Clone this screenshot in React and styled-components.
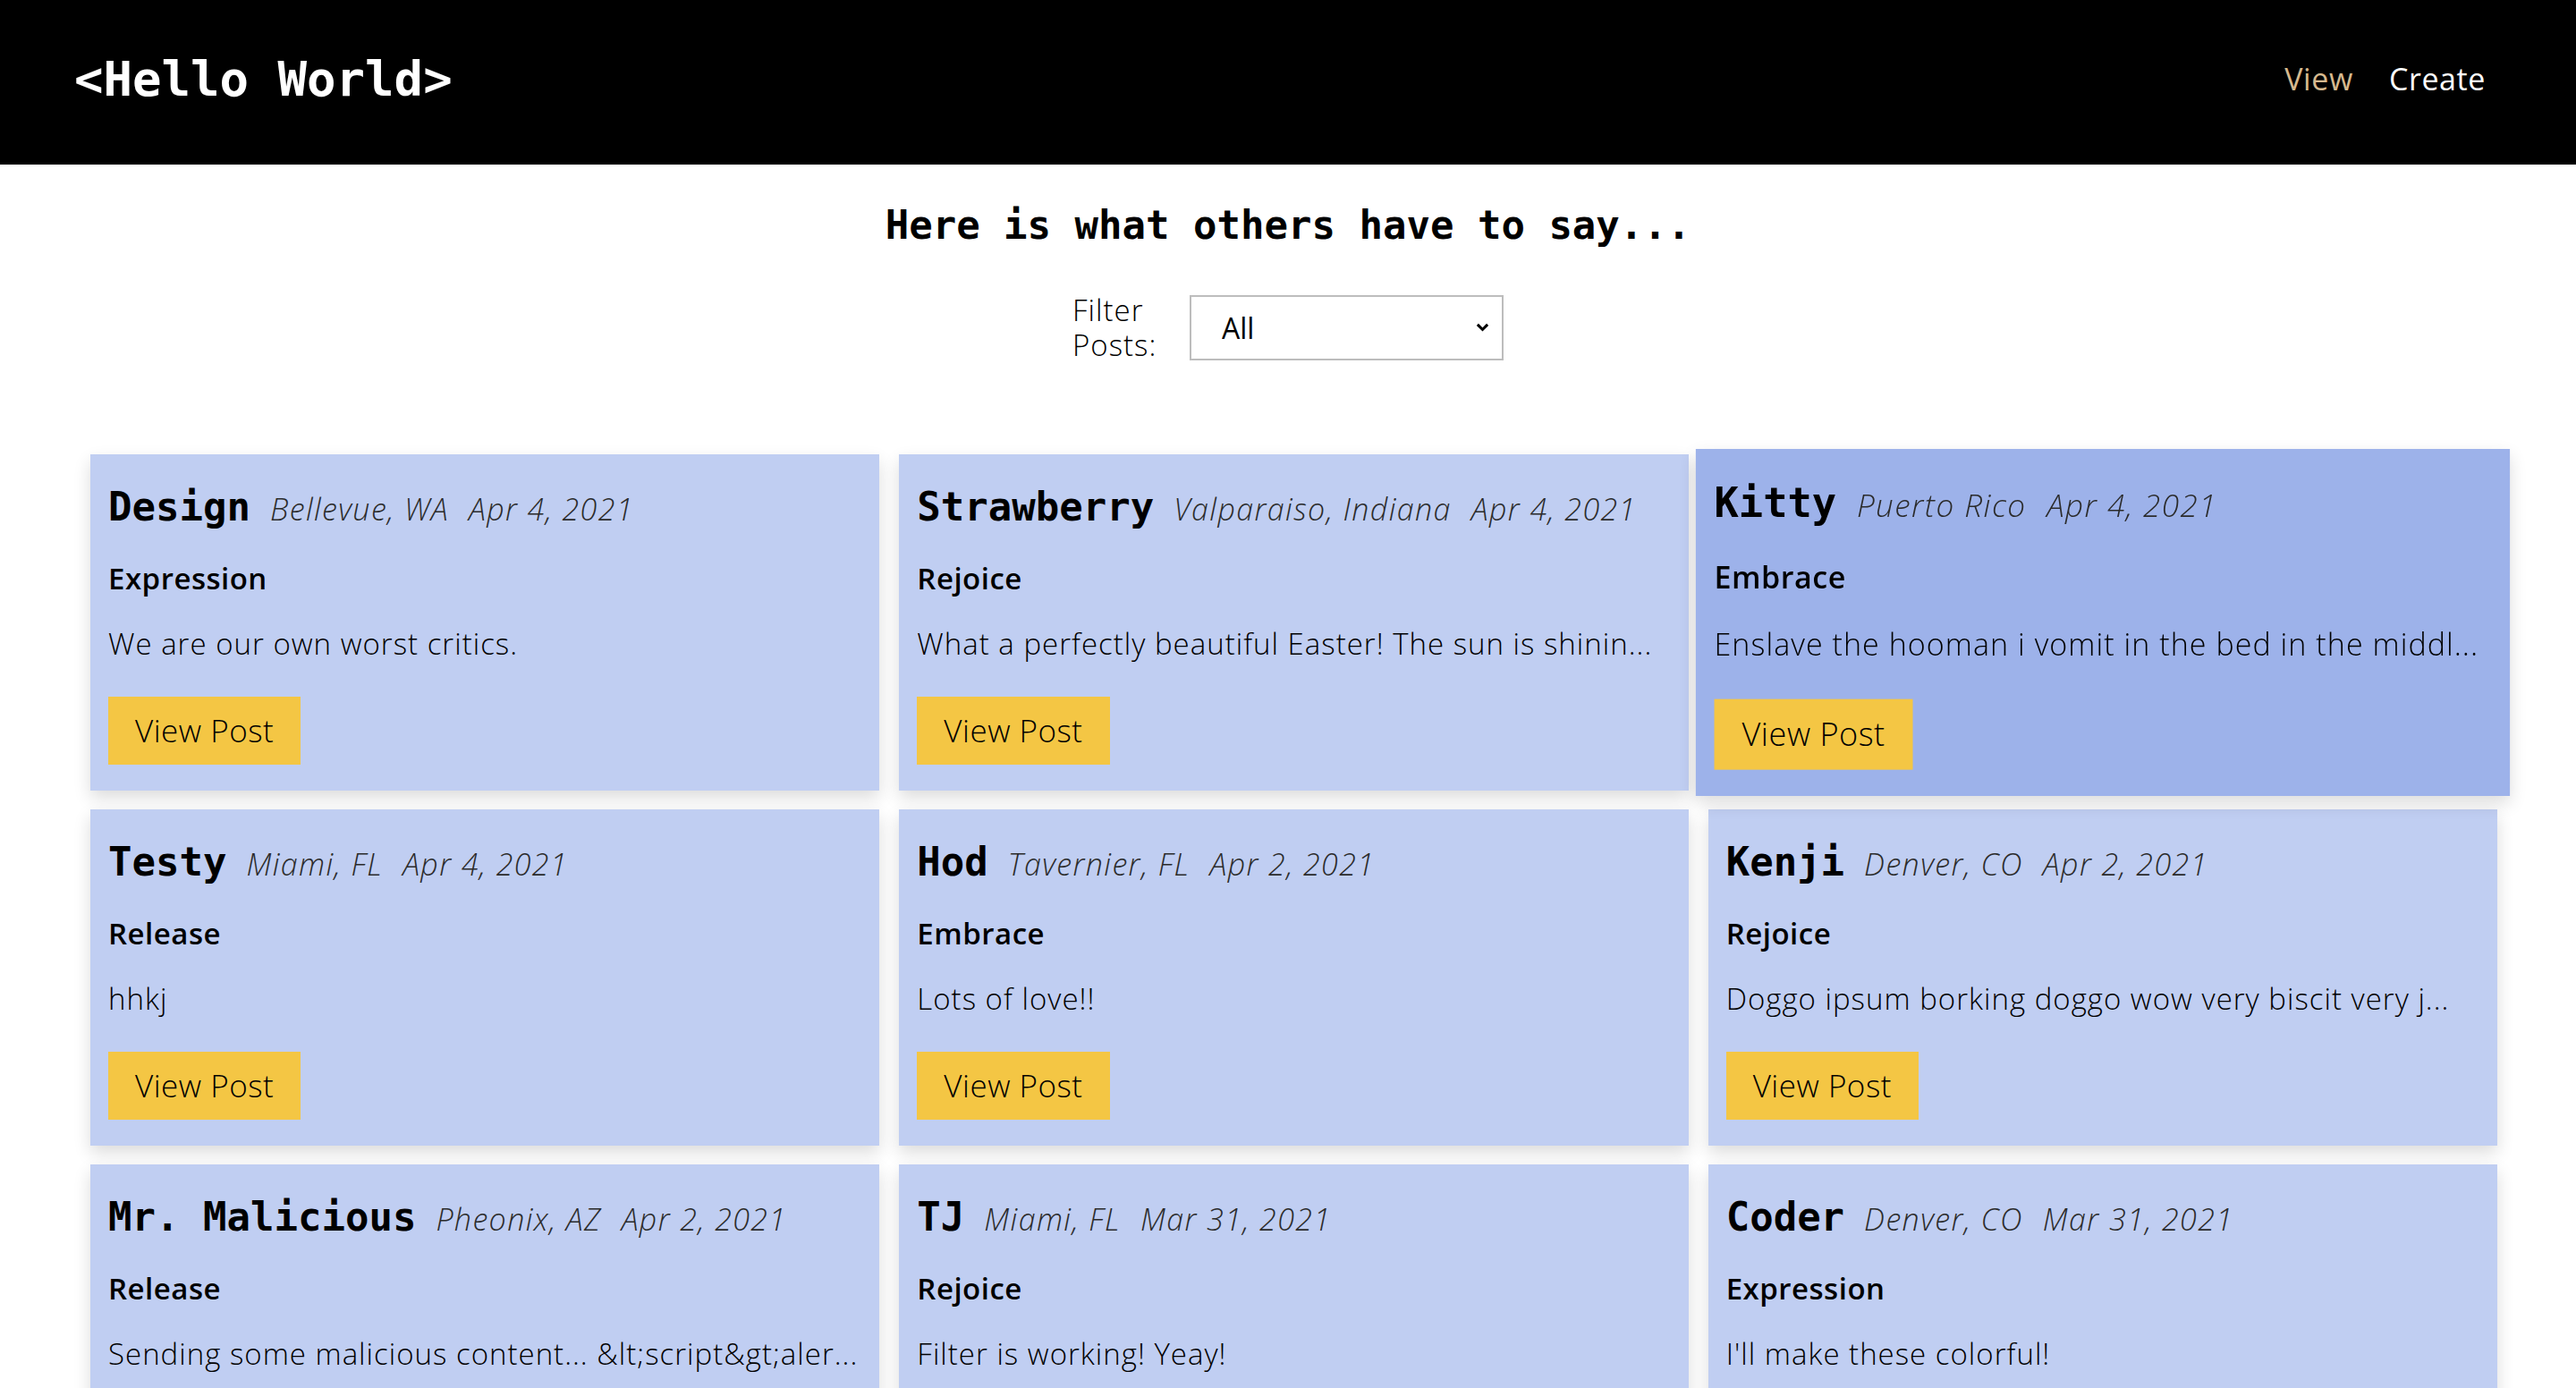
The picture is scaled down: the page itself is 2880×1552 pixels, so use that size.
import styled, { createGlobalStyle } from "styled-components";
import { useState } from "react";

const posts = [
  { name: "Design", location: "Bellevue, WA", date: "Apr 4, 2021", category: "Expression", body: "We are our own worst critics." },
  { name: "Strawberry", location: "Valparaiso, Indiana", date: "Apr 4, 2021", category: "Rejoice", body: "What a perfectly beautiful Easter! The sun is shinin..." },
  { name: "Kitty", location: "Puerto Rico", date: "Apr 4, 2021", category: "Embrace", body: "Enslave the hooman i vomit in the bed in the middl...", active: true },
  { name: "Testy", location: "Miami, FL", date: "Apr 4, 2021", category: "Release", body: "hhkj" },
  { name: "Hod", location: "Tavernier, FL", date: "Apr 2, 2021", category: "Embrace", body: "Lots of love!!" },
  { name: "Kenji", location: "Denver, CO", date: "Apr 2, 2021", category: "Rejoice", body: "Doggo ipsum borking doggo wow very biscit very j..." },
  { name: "Mr. Malicious", location: "Pheonix, AZ", date: "Apr 2, 2021", category: "Release", body: "Sending some malicious content... &lt;script&gt;aler..." },
  { name: "TJ", location: "Miami, FL", date: "Mar 31, 2021", category: "Rejoice", body: "Filter is working! Yeay!" },
  { name: "Coder", location: "Denver, CO", date: "Mar 31, 2021", category: "Expression", body: "I'll make these colorful!" },
];

const App = () => {
  const [filter, setFilter] = useState("All");

  return (
    <>
      <GlobalStyle />
      <Header>
        <Logo>&lt;Hello World&gt;</Logo>
        <Nav>
          <NavLink $active>View</NavLink>
          <NavLink>Create</NavLink>
        </Nav>
      </Header>
      <Main>
        <PageTitle>Here is what others have to say...</PageTitle>
        <FilterRow>
          <FilterLabel htmlFor="filter">Filter Posts:</FilterLabel>
          <SelectWrap>
            <FilterSelect id="filter" value={filter} onChange={(e) => setFilter(e.target.value)}>
              <option>All</option>
              <option>Expression</option>
              <option>Rejoice</option>
              <option>Embrace</option>
              <option>Release</option>
            </FilterSelect>
            <Chevron viewBox="0 0 12 8">
              <path d="M1.5 1.5 L6 6 L10.5 1.5" />
            </Chevron>
          </SelectWrap>
        </FilterRow>
        <PostGrid>
          {posts
            .filter((p) => filter === "All" || p.category === filter)
            .map((p, idx) => (
              <PostCard key={idx} $active={p.active}>
                <PostHead>
                  <PostName>{p.name}</PostName>
                  <PostMeta>{p.location}</PostMeta>
                  <PostMeta>{p.date}</PostMeta>
                </PostHead>
                <PostCategory>{p.category}</PostCategory>
                <PostBody>{p.body}</PostBody>
                <ViewButton>View Post</ViewButton>
              </PostCard>
            ))}
        </PostGrid>
      </Main>
    </>
  );
};

export default App;

const GlobalStyle = createGlobalStyle`
  * {
    box-sizing: border-box;
  }
  body {
    margin: 0;
    background: #ffffff;
    font-family: "Open Sans", "Noto Sans", sans-serif;
    color: #000;
  }
`;

const Header = styled.header`
  display: flex;
  justify-content: space-between;
  align-items: center;
  height: 184px;
  padding: 0 101px 8px 83px;
  background: #000;
`;

const Logo = styled.div`
  color: #fff;
  font-family: "DejaVu Sans Mono", "Liberation Mono", monospace;
  font-weight: bold;
  font-size: 54px;
`;

const Nav = styled.nav`
  display: flex;
  gap: 40px;
`;

const NavLink = styled.a`
  color: ${(p) => (p.$active ? "#d6b98e" : "#ffffff")};
  font-size: 34px;
  letter-spacing: 0.6px;
  font-weight: 400;
  cursor: pointer;
`;

const Main = styled.main`
  display: flex;
  flex-direction: column;
  align-items: center;
`;

const PageTitle = styled.h1`
  margin: 42px 0 0;
  font-family: "DejaVu Sans Mono", "Liberation Mono", monospace;
  font-weight: bold;
  font-size: 44px;
  line-height: 52px;
`;

const FilterRow = styled.div`
  display: flex;
  align-items: center;
  gap: 34px;
  margin-top: 49px;
`;

const FilterLabel = styled.label`
  width: 97px;
  font-size: 33px;
  letter-spacing: 1px;
  line-height: 39px;
  font-weight: 300;
`;

const SelectWrap = styled.div`
  position: relative;
  display: flex;
`;

const FilterSelect = styled.select`
  appearance: none;
  width: 351px;
  height: 73px;
  padding: 0 40px 0 34px;
  border: 2px solid #bdbdbd;
  border-radius: 0;
  background: #fff;
  font-family: "Open Sans", sans-serif;
  font-size: 32px;
  color: #000;
`;

const Chevron = styled.svg`
  position: absolute;
  right: 16px;
  top: 31px;
  width: 15px;
  height: 10px;
  fill: none;
  stroke: #000;
  stroke-width: 2.4;
  pointer-events: none;
`;

const PostGrid = styled.div`
  align-self: stretch;
  display: grid;
  grid-template-columns: repeat(3, 1fr);
  gap: 21px 22px;
  margin: 103px 88px 60px 101px;
`;

const PostCard = styled.div`
  display: flex;
  flex-direction: column;
  align-items: flex-start;
  min-width: 0;
  height: 376px;
  padding: 32px 12px 29px 20px;
  background: ${(p) => (p.$active ? "#9db2ea" : "#c0cef2")};
  box-shadow: 0 8px 18px rgba(0, 0, 0, 0.14);
  transform: ${(p) => (p.$active ? "scale(1.032)" : "none")};
`;

const PostHead = styled.div`
  display: flex;
  align-items: baseline;
  gap: 22px;
  height: 54px;
  white-space: nowrap;
`;

const PostName = styled.h2`
  margin: 0;
  font-family: "DejaVu Sans Mono", "Liberation Mono", monospace;
  font-weight: bold;
  font-size: 44px;
  line-height: 54px;
`;

const PostMeta = styled.span`
  font-style: italic;
  font-weight: 300;
  font-size: 34px;
  letter-spacing: 1.4px;
  color: #2b2b2b;
`;

const PostCategory = styled.h3`
  margin: 30px 0 0;
  font-size: 33px;
  letter-spacing: 0.5px;
  line-height: 46px;
  font-weight: 600;
`;

const PostBody = styled.p`
  width: 100%;
  margin: 27px 0 0;
  font-size: 33px;
  letter-spacing: 1px;
  line-height: 46px;
  font-weight: 300;
  white-space: nowrap;
  overflow: hidden;
  text-overflow: ellipsis;
`;

const ViewButton = styled.button`
  margin-top: 36px;
  height: 77px;
  padding: 0 30px;
  border: none;
  background: #f4c644;
  font-family: "Open Sans", sans-serif;
  font-size: 35px;
  letter-spacing: 0.5px;
  font-weight: 300;
  color: #000;
  cursor: pointer;
`;
